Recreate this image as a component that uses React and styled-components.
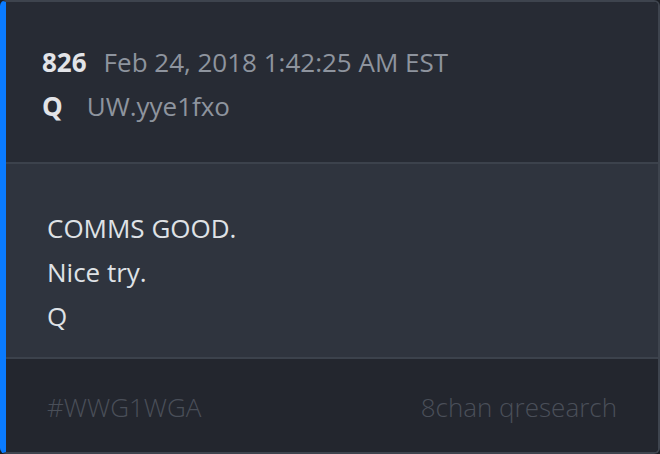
import React from 'react'
import styled, { createGlobalStyle } from 'styled-components'

const GlobalStyle = createGlobalStyle`
  html, body {
    margin: 0;
    padding: 0;
    background: #1b1e24;
  }
  * { box-sizing: border-box; }
`;

const Card = styled.div`
  width: 660px;
  height: 454px;
  display: flex;
  flex-direction: column;
  border: 2px solid #3e444e;
  border-left: 6px solid #0a7bff;
  border-radius: 6px;
  overflow: hidden;
  font-family: "Open Sans", "Noto Sans", sans-serif;
  font-size: 26px;
`;

const Header = styled.div`
  height: 162px;
  flex-shrink: 0;
  background: #272b34;
  padding: 38px 0 0 36px;
  border-bottom: 2px solid #3c424c;
`;

const MetaRow = styled.div`
  display: flex;
  align-items: baseline;
  line-height: 44px;
`;

const Strong = styled.span`
  font-weight: 700;
  color: #e2e4e8;
  margin-right: ${p => p.$gap || '17px'};
`;

const Muted = styled.span`
  color: #8e949e;
`;

const Body = styled.div`
  height: 195px;
  flex-shrink: 0;
  background: #2f343e;
  padding: 42px 0 0 41px;
  border-bottom: 2px solid #3c424c;
`;

const Line = styled.div`
  line-height: 44px;
  color: #dfe2e6;
`;

const Footer = styled.div`
  flex: 1;
  background: #23262e;
  display: flex;
  justify-content: space-between;
  align-items: center;
  padding: 3px 41px 0;
  font-weight: 300;
  color: #4a4f59;
`;

export default function App() {
  return (
    <>
      <GlobalStyle />
      <Card>
        <Header>
          <MetaRow>
            <Strong>826</Strong>
            <Muted>Feb 24, 2018 1:42:25 AM EST</Muted>
          </MetaRow>
          <MetaRow>
            <Strong $gap="24px">Q</Strong>
            <Muted>UW.yye1fxo</Muted>
          </MetaRow>
        </Header>
        <Body>
          <Line>COMMS GOOD.</Line>
          <Line>Nice try.</Line>
          <Line>Q</Line>
        </Body>
        <Footer>
          <span>#WWG1WGA</span>
          <span>8chan qresearch</span>
        </Footer>
      </Card>
    </>
  )
}
